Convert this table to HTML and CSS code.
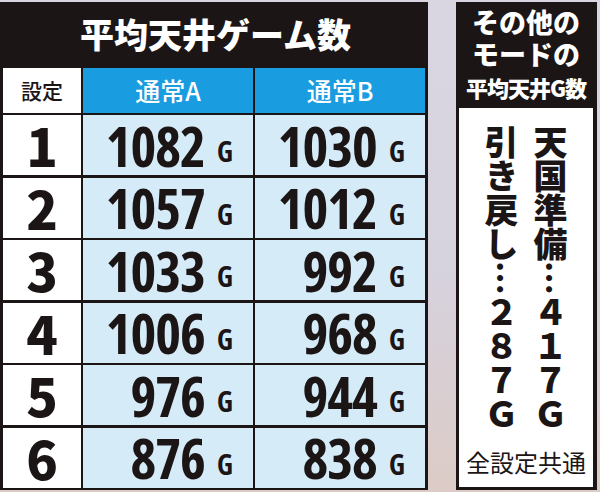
FILE: index.html
```html
<!DOCTYPE html>
<html lang="ja">
<head>
<meta charset="UTF-8" />
<meta name="viewport" content="width=device-width, initial-scale=1.0"/>
<title>平均天井ゲーム数</title>
<link rel="stylesheet" href="styles.css">
</head>
<body>
<div class="board">
    <div class="table">
        <div class="title">平均天井ゲーム数</div>
        <div class="head setting">設定</div>
        <div class="head mode">通常A</div>
        <div class="head mode">通常B</div>

        <div class="no">1</div>
        <div class="val">1082<span class="g">G</span></div>
        <div class="val">1030<span class="g">G</span></div>

        <div class="no">2</div>
        <div class="val">1057<span class="g">G</span></div>
        <div class="val">1012<span class="g">G</span></div>

        <div class="no">3</div>
        <div class="val">1033<span class="g">G</span></div>
        <div class="val">992<span class="g">G</span></div>

        <div class="no">4</div>
        <div class="val">1006<span class="g">G</span></div>
        <div class="val">968<span class="g">G</span></div>

        <div class="no">5</div>
        <div class="val">976<span class="g">G</span></div>
        <div class="val">944<span class="g">G</span></div>

        <div class="no">6</div>
        <div class="val">876<span class="g">G</span></div>
        <div class="val">838<span class="g">G</span></div>
    </div>

    <div class="side">
        <div class="side-head">
            <div class="line big">その他の</div>
            <div class="line big">モードの</div>
            <div class="line small">平均天井G数</div>
        </div>
        <div class="side-body">
            <div class="vert">天国準備…４１７Ｇ<br>引き戻し…２８７Ｇ</div>
            <div class="note">全設定共通</div>
        </div>
    </div>
</div>
</body>
</html>
```

FILE: styles.css
```css
body {
    margin: 0;
    min-height: 492px;
    background: linear-gradient(180deg, #d9d6e1 0%, #d6d2de 55%, #dccbc6 100%);
    font-family: "Noto Sans CJK JP", "Noto Sans", sans-serif;
}

.board {
    display: flex;
    align-items: flex-start;
    padding-top: 2px;
}

/* left table */
.table {
    width: 428px;
    box-sizing: border-box;
    background: #1c1516;
    padding: 0 3px 2.5px 3px;
    display: grid;
    grid-template-columns: 78px 170px 170px;
    grid-template-rows: 63px 45px repeat(6, 60px);
    gap: 2.5px 2px;
}

.title {
    grid-column: 1 / 4;
    color: #fff;
    font-size: 34px;
    font-weight: 900;
    display: flex;
    align-items: center;
    justify-content: center;
    padding-left: 3px;
}

.head {
    display: flex;
    align-items: center;
    justify-content: center;
}

.setting {
    background: #fff;
    color: #1c1516;
    font-size: 21px;
    font-weight: 500;
}

.mode {
    background: #1a9ce0;
    color: #fff;
    font-size: 25px;
    font-weight: 500;
}

.no {
    background: #fff;
    color: #1c1516;
    font-size: 52px;
    font-weight: 900;
    display: flex;
    align-items: center;
    justify-content: center;
    line-height: 1;
}

.val {
    background: #d5ebf8;
    color: #1c1516;
    font-family: "Open Sans", "Liberation Sans", sans-serif;
    font-stretch: 75%;
    font-weight: 700;
    font-size: 55px;
    letter-spacing: -1px;
    display: flex;
    align-items: center;
    justify-content: flex-end;
    padding-right: 20px;
    line-height: 1;
}

.g {
    font-size: 28px;
    margin-left: 12px;
    margin-top: 12px;
    letter-spacing: 0;
}

/* right panel */
.side {
    margin-left: 28px;
    width: 141px;
    height: 488px;
    box-sizing: border-box;
    background: #1c1516;
    padding: 0 4px 3px 3px;
    display: flex;
    flex-direction: column;
}

.side-head {
    height: 106px;
    color: #fff;
    font-weight: 900;
    text-align: center;
    padding-top: 4px;
    box-sizing: border-box;
}

.line.big {
    font-size: 27px;
    line-height: 32px;
}

.line.small {
    font-size: 22px;
    line-height: 28px;
    margin-top: 3px;
    letter-spacing: -1px;
}

.side-body {
    flex: 1;
    background: #fff;
    display: flex;
    flex-direction: column;
    align-items: center;
    padding-top: 17px;
}

.vert {
    writing-mode: vertical-rl;
    font-size: 34px;
    line-height: 49px;
    font-weight: 900;
    color: #1c1516;
    height: 306px;
}

.note {
    margin-top: 17px;
    font-size: 24px;
    line-height: 28px;
    color: #1c1516;
}
```
